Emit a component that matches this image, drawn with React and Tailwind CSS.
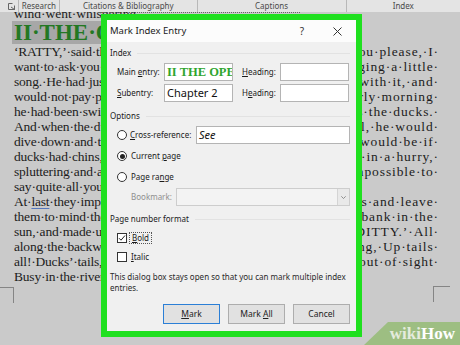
import React from 'react';

const lines = [
  ['‘RATTY,’·said·the·Mole·suddenly,', 'morning,·‘if·you·please,·I·'],
  ['want·to·ask·you·a·favour.’', 'bank,·singing·a·little·'],
  ['song.·He·had·just·composed', 'taken·up·with·it,·and·'],
  ['would·not·pay·proper·attention', 'else.·Since·early·morning·'],
  ['he·had·been·swimming·in·the', 'his·friends·the·ducks.·'],
  ['And·when·the·ducks·stood·on', 'as·ducks·will,·he·would·'],
  ['dive·down·and·tickle·their', 'their·chins·would·be·if·'],
  ['ducks·had·chins,·till·they', 'surface·again·in·a·hurry,·'],
  ['spluttering·and·angry·and', 'for·it·is·impossible·to·'],
  ['say·quite·all·you·feel·when', ''],
  ['At·last·they·implored·him', 'own·affairs·and·leave·'],
  ['them·to·mind·theirs.·So·the', 'the·river·bank·in·the·'],
  ['sun,·and·made·up·a·song', '‘DUCKS’·DITTY.’·All·'],
  ['along·the·backwater,·Through', 'a-dabbling,·Up·tails·'],
  ['all!·Ducks’·tails,·drakes’', 'Yellow·bills·all·out·of·sight·'],
  ['Busy·in·the·river!¶', ''],
];

const Ribbon = () => (
  <div className="relative z-10 flex h-[12px] bg-[#e4e4e4] text-[8px] leading-[12px] text-[#4a4a4a] font-['Noto_Sans',sans-serif]">
    <div className="w-[20px] flex items-center justify-end pr-[3px] border-r border-[#b8b8b8]">
      <svg width="7" height="7" viewBox="0 0 7 7" fill="none" stroke="#666" strokeWidth="1">
        <path d="M0.5 0.5h4M0.5 0.5v6h6v-4" />
        <path d="M3 4l3.5 2.5M6.5 4.5v2h-2" />
      </svg>
    </div>
    <div className="w-[44px] text-center border-r border-[#b8b8b8]">Research</div>
    <div className="w-[148px] text-center border-r border-[#b8b8b8]">Citations &amp; Bibliography</div>
    <div className="w-[160px] text-center border-r border-[#b8b8b8]">Captions</div>
    <div className="w-[122px] text-center">Index</div>
  </div>
);

const Document = () => (
  <div className="h-[333px] overflow-hidden pl-[14px] pr-[21px] text-[13.5px] leading-[15px] text-[#1c1c1c] whitespace-nowrap">
    <div className="-mt-[6px]">wind·went·whispering</div>
    <div className="h-[23px]">
      <span className="inline-block -ml-[2px] pl-[2px] pr-[40px] bg-[#a7a7a7] text-[23px] leading-[23px] font-bold text-[#237823]">
        II·THE·OPEN·ROAD¶
      </span>
    </div>
    {lines.map(([left, right], idx) => (
      <div key={idx} className="flex justify-between h-[15px]">
        <span className="tracking-[-0.2px]">
          {idx === 10 ? (
            <>
              At·<span className="underline decoration-[#5577bb] underline-offset-2">last</span>·they·implored·him
            </>
          ) : (
            left
          )}
        </span>
        <span className="tracking-[0.9px]">{right}</span>
      </div>
    ))}
  </div>
);

const U = ({ children }) => <span className="underline underline-offset-[1px]">{children}</span>;

const GroupLabel = ({ label, className }) => (
  <div className={`flex items-center h-[12px] ${className}`}>
    <span>{label}</span>
    <div className="ml-[6px] flex-1 h-px bg-[#e2e2e2]" />
  </div>
);

const Radio = ({ checked }) => (
  <div className="w-[10px] h-[10px] rounded-full border border-[#333] bg-white flex items-center justify-center">
    {checked && <div className="w-[5px] h-[5px] rounded-full bg-[#222]" />}
  </div>
);

const Checkbox = ({ checked }) => (
  <div className="w-[10px] h-[10px] border border-[#333] bg-white flex items-center justify-center">
    {checked && (
      <svg width="8" height="8" viewBox="0 0 8 8" fill="none" stroke="#222" strokeWidth="1">
        <path d="M1 4.2l2 2L7 1.5" />
      </svg>
    )}
  </div>
);

const Input = ({ className, children }) => (
  <div className={`h-[18px] bg-white border border-[#b4b4b4] overflow-hidden whitespace-nowrap flex items-center ${className}`}>
    {children}
  </div>
);

const Button = ({ children, primary }) => (
  <div
    className={`w-[57px] h-[20px] flex items-center justify-center bg-[#e1e1e1] text-[8.5px] text-[#222] border ${
      primary ? 'border-[#2b7fd6]' : 'border-[#adadad]'
    }`}
  >
    <span>{children}</span>
  </div>
);

const Dialog = () => (
  <div className="absolute left-[101px] top-[14px] w-[261px] h-[323px] border-[6px] border-[#1fe01f] bg-[#f0f0f0] flex flex-col font-['Noto_Sans',sans-serif] text-[#1a1a1a]">
    {/* Title bar */}
    <div className="h-[22px] bg-[#fcfcfc] flex items-center pl-[3px] pr-[4px]">
      <span className="text-[9.5px]">Mark Index Entry</span>
      <div className="ml-auto w-[24px] text-center text-[10px] text-[#333]">?</div>
      <div className="ml-[8px] w-[30px] flex items-center justify-center">
        <svg width="9" height="9" viewBox="0 0 9 9" stroke="#333" strokeWidth="1">
          <path d="M0.5 0.5l8 8M8.5 0.5l-8 8" />
        </svg>
      </div>
    </div>

    <div className="pl-[3px] pr-[6px] text-[8px]">
      <GroupLabel label="Index" className="mt-[5px]" />

      <div className="flex items-center h-[18px] mt-[4px]">
        <div className="w-[54px] pl-[7px]">Main <U>e</U>ntry:</div>
        <Input className="w-[69px] pl-[2px]">
          <span className="font-['Liberation_Serif',serif] font-bold text-[12.5px] text-[#2fa52f]">II THE OPEN ROAD</span>
        </Input>
        <div className="w-[47px] pl-[9px]"><U>H</U>eading:</div>
        <Input className="w-[69px]" />
      </div>

      <div className="flex items-center h-[18px] mt-[3px]">
        <div className="w-[54px] pl-[7px]"><U>S</U>ubentry:</div>
        <Input className="w-[69px] pl-[2px]">
          <span className="text-[11px] text-[#111]">Chapter 2</span>
        </Input>
        <div className="w-[47px] pl-[9px]">H<U>e</U>ading:</div>
        <Input className="w-[69px]" />
      </div>

      <GroupLabel label="Options" className="mt-[8px]" />

      <div className="flex items-center h-[18px] mt-[4px] pl-[7px]">
        <Radio />
        <div className="w-[69px] pl-[3px]"><U>C</U>ross-reference:</div>
        <Input className="flex-1 pl-[2px]">
          <span className="italic text-[11px] text-[#111]">See</span>
        </Input>
      </div>

      <div className="flex items-center h-[12px] mt-[6px] pl-[7px]">
        <Radio checked />
        <span className="ml-[4px]">Current <U>p</U>age</span>
      </div>

      <div className="flex items-center h-[12px] mt-[9px] pl-[7px]">
        <Radio />
        <span className="ml-[4px]">Page ra<U>n</U>ge</span>
      </div>

      <div className="flex items-center h-[18px] mt-[5px]">
        <div className="w-[66px] pl-[21px] text-[#8f8f8f]">Bookmark:</div>
        <div className="flex-1 h-[18px] flex border border-[#cdcdcd] bg-[#f3f3f3]">
          <div className="flex-1" />
          <div className="w-[12px] border-l border-[#d4d4d4] bg-[#e9e9e9] flex items-center justify-center">
            <svg width="5" height="3" viewBox="0 0 5 3" fill="none" stroke="#777" strokeWidth="0.8">
              <path d="M0.3 0.3l2.2 2.2 2.2-2.2" />
            </svg>
          </div>
        </div>
      </div>

      <GroupLabel label="Page number format" className="mt-[7px]" />

      <div className="flex items-center h-[12px] mt-[7px] pl-[7px]">
        <Checkbox checked />
        <span className="ml-[2px] px-[2px] border border-dotted border-[#555] leading-[10px]"><U>B</U>old</span>
      </div>

      <div className="flex items-center h-[12px] mt-[7px] pl-[7px]">
        <Checkbox />
        <span className="ml-[4px]"><U>I</U>talic</span>
      </div>

      <div className="mt-[8px] leading-[11px] text-[#2a2a2a]">
        This dialog box stays open so that you can mark multiple index
        <br />
        entries.
      </div>

      <div className="flex justify-end gap-[8px] mt-[11px]">
        <Button primary><U>M</U>ark</Button>
        <Button>Mark <U>A</U>ll</Button>
        <Button>Cancel</Button>
      </div>
    </div>
  </div>
);

const WikiHow = () => (
  <div className="absolute right-0 bottom-0 w-[96px] h-[23px] bg-[#9dbe82] [clip-path:polygon(25%_0,100%_0,100%_100%,0_100%)] flex items-center justify-end pr-[5px] font-['Liberation_Serif',serif] font-bold text-[17px] leading-[23px]">
    <span className="text-[#e4ebdd]">wiki</span>
    <span className="text-white">How</span>
  </div>
);

export default function App() {
  return (
    <div className="relative w-[460px] h-[345px] overflow-hidden bg-[#cacaca] font-['Liberation_Serif',serif]">
      <Ribbon />
      <Document />
      <div className="absolute left-0 top-[287px] w-[14px] h-[16px] border-t border-r border-[#858585]" />
      <div className="absolute left-[433px] top-[286px] w-[17px] h-[16px] border-t border-l border-[#858585]" />
      <div className="absolute left-[100px] top-[12px] w-[200px] border-t border-dotted border-[#666]" />
      <Dialog />
      <WikiHow />
    </div>
  );
}
